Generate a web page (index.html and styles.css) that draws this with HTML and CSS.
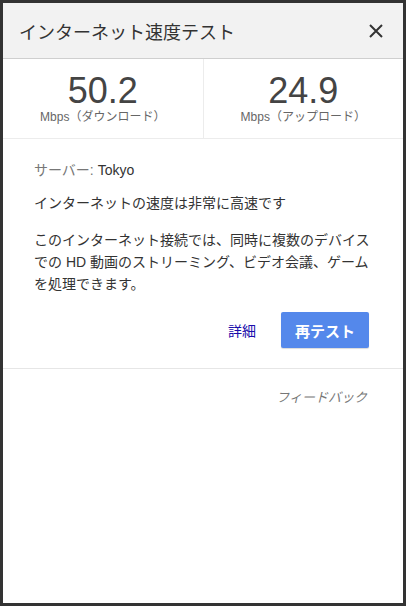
FILE: index.html
```html
<!DOCTYPE html>
<html lang="ja">
<head>
<meta charset="utf-8">
<link rel="stylesheet" href="styles.css">
</head>
<body>
<div class="dialog">
  <div class="header">
    <div class="title">インターネット速度テスト</div>
    <svg class="close" width="14" height="14" viewBox="0 0 14 14"><path d="M1 1L13 13M13 1L1 13" stroke="#333" stroke-width="2"/></svg>
  </div>
  <div class="stats">
    <div class="stat">
      <div class="num">50.2</div>
      <div class="unit">Mbps（ダウンロード）</div>
    </div>
    <div class="stat">
      <div class="num">24.9</div>
      <div class="unit">Mbps（アップロード）</div>
    </div>
  </div>
  <div class="content">
    <p class="server"><span class="label">サーバー:</span> Tokyo</p>
    <p class="speed">インターネットの速度は非常に高速です</p>
    <p class="desc">このインターネット接続では、同時に複数のデバイスでの HD 動画のストリーミング、ビデオ会議、ゲームを処理できます。</p>
    <div class="actions">
      <span class="link">詳細</span>
      <span class="btn">再テスト</span>
    </div>
  </div>
  <div class="footer">
    <span class="feedback">フィードバック</span>
  </div>
</div>
</body>
</html>
```
FILE: styles.css
```css
html, body {
  margin: 0;
  padding: 0;
  background: #333;
}
body {
  font-family: "Liberation Sans", "Noto Sans CJK JP", sans-serif;
  color: #333;
  padding: 3px;
}
.dialog {
  width: 400px;
  height: 600px;
  background: #fff;
  box-sizing: border-box;
}
.header {
  height: 56px;
  background: #f2f2f2;
  border-bottom: 1px solid #cfcfcf;
  box-sizing: border-box;
  display: flex;
  align-items: center;
  justify-content: space-between;
  padding: 4px 20px 0 16px;
}
.title {
  font-size: 18px;
  color: #333;
  line-height: 24px;
}
.close {
  display: block;
  margin-top: -4px;
}
.stats {
  display: flex;
  border-bottom: 1px solid #ececec;
}
.stat {
  flex: 1;
  text-align: center;
  padding: 14px 0 14px;
}
.stat + .stat {
  border-left: 1px solid #ececec;
}
.num {
  font-size: 36px;
  line-height: 36px;
  color: #444;
}
.unit {
  font-size: 12px;
  line-height: 14px;
  margin-top: 1px;
  color: #666;
}
.content {
  padding: 20px 34px 20px 31px;
  border-bottom: 1px solid #e6e6e6;
}
.content p {
  margin: 0;
  font-size: 14px;
  line-height: 22px;
  color: #333;
}
.content p.desc {
  margin-right: -6px;
}
.server .label {
  color: #777;
}
.speed {
  margin-top: 11px !important;
}
.desc {
  margin-top: 15px !important;
}
.actions {
  display: flex;
  justify-content: flex-end;
  align-items: center;
  margin-top: 17px;
}
.link {
  font-size: 14px;
  color: #1a0dab;
  margin-right: 25px;
}
.btn {
  display: flex;
  align-items: center;
  justify-content: center;
  width: 88px;
  height: 36px;
  background: #5488eb;
  color: #fff;
  font-size: 15px;
  font-weight: bold;
  border-radius: 2px;
  box-shadow: 0 1px 1px rgba(0,0,0,0.15);
}
.footer {
  display: flex;
  justify-content: flex-end;
  padding: 18px 36px;
}
.feedback {
  font-size: 13px;
  font-style: italic;
  color: #777;
  line-height: 22px;
}
```
